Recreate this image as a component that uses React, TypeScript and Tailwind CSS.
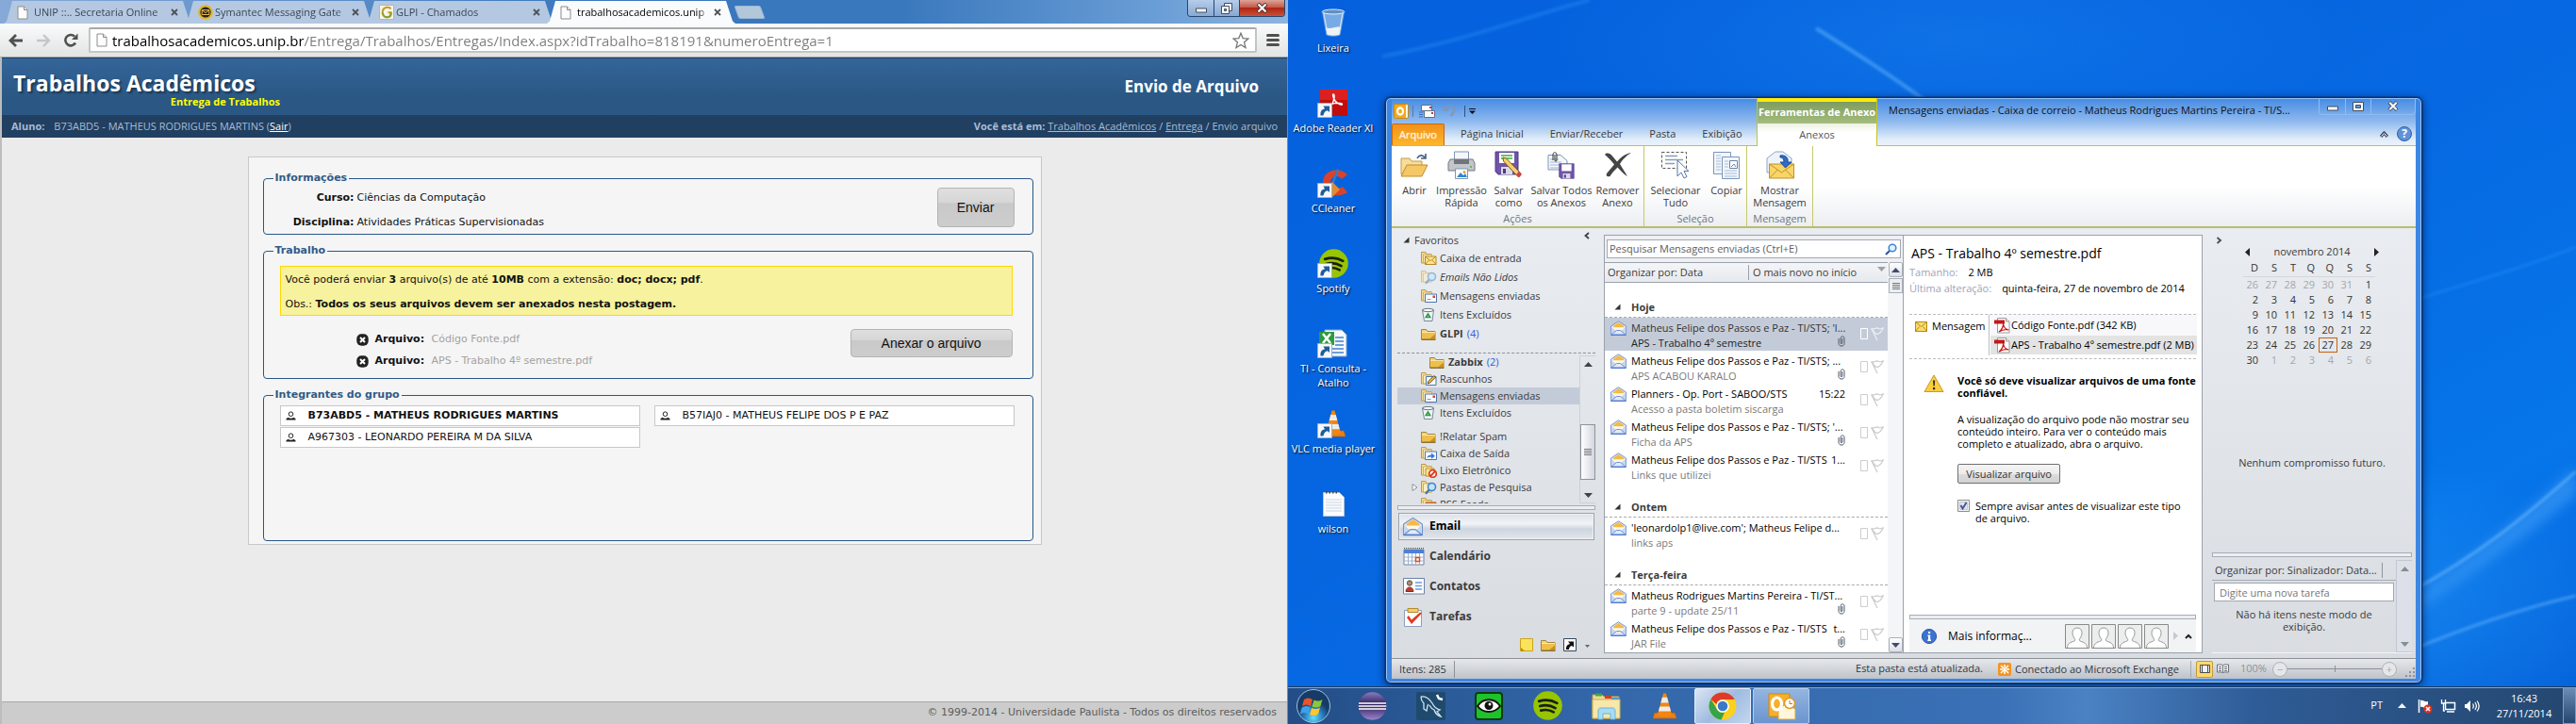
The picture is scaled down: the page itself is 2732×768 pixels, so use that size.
import React from "react";

const SANS = "font-['Open_Sans','Noto_Sans',sans-serif]";
const VERDANA = "font-['DejaVu_Sans',sans-serif]";

/* ---------------------------------------------------------------- icons */

function PageIcon() {
  return (
    <svg width="12" height="15" viewBox="0 0 12 15" className="shrink-0" aria-hidden="true">
      <path d="M1 1h6.5L11 4.5V14H1z" fill="#fdfdfd" stroke="#8d8d8d" />
      <path d="M7.5 1v3.5H11" fill="#e4e4e4" stroke="#8d8d8d" />
    </svg>
  );
}

function SymantecIcon() {
  return (
    <svg width="16" height="16" viewBox="0 0 16 16" className="shrink-0" aria-hidden="true">
      <circle cx="8" cy="8" r="7.8" fill="#e3b52c" />
      <circle cx="8" cy="8" r="5.6" fill="#26231a" />
      <path d="M4.2 5.7h7.6v4.8H4.2z" fill="#26231a" stroke="#e3c15a" />
      <path d="M4.2 5.7L8 8.6l3.8-2.9" fill="none" stroke="#e3c15a" />
    </svg>
  );
}

function GlpiIcon() {
  return (
    <svg width="16" height="16" viewBox="0 0 16 16" className="shrink-0" aria-hidden="true">
      <path d="M.5.5h15v15H.5z" fill="#f7f5e8" stroke="#b7b7a8" />
      <path d="M12.6 4.4C10.8 1.9 5.6 2.2 4 6c-1.5 4 1.400 7.500 4.800 7.300 2.600-.2 4-2.400 3.900-5.100H9.500" fill="none" stroke="#c79a23" strokeWidth="2" />
      <path d="M3.800 8.500c.3 3 2.500 4.900 5 4.800 2.600-.2 4-2.400 3.900-5.100" fill="none" stroke="#7fa23a" strokeWidth="2" />
    </svg>
  );
}

type FolderKind = "plain" | "inbox" | "search" | "faded" | "sent" | "draft" | "out" | "junk" | "rss";

function FolderIcon({ kind = "plain" }: { kind?: FolderKind }) {
  if (kind === "plain") {
    return (
      <svg width="16" height="14" viewBox="0 0 16 14" className="shrink-0" aria-hidden="true">
        <path d="M.5 2.500h5l1.500 2h8v8.500H.5z" fill="#f3d27a" stroke="#a4863c" />
        <path d="M1 5.500h14v7H1z" fill="#f0bf4a" />
        <path d="M9 12.500l6-5v5z" fill="#c98f1d" />
        <path d="M.5 13.200h15" stroke="#6f5415" />
        <path d="M1 5.500h14" stroke="#fbe6ac" />
      </svg>
    );
  }
  return (
    <svg width="17" height="16" viewBox="0 0 17 16" className={"shrink-0 " + (kind === "faded" ? "opacity-50" : "")} aria-hidden="true">
      <path d="M.5 1.500h4.500l1 2h5v9.500H.5z" fill="#f6dc91" stroke="#bf9b49" />
      <path d="M2.500 4h9v9h-9z" fill="#fbedc0" stroke="#cfae60" />
      {kind === "inbox" && (
        <>
          <path d="M4.500 6h11.500v8.500H4.500z" fill="#ffe493" stroke="#b98a26" />
          <path d="M4.500 6l5.700 4.700L16 6M4.500 14.500l4-4.600M16 14.500l-4-4.600" fill="none" stroke="#b98a26" />
        </>
      )}
      {(kind === "search" || kind === "faded") && (
        <>
          <circle cx="11.500" cy="7.500" r="4" fill="#bfe4fb" stroke="#4383c4" strokeWidth="1.600" />
          <path d="M8.600 10.600L5 14.800" stroke="#3a6ea8" strokeWidth="2.200" />
        </>
      )}
      {kind === "sent" && (
        <>
          <path d="M4.500 6h12v8.500h-12z" fill="#f7fbff" stroke="#4f74ad" />
          <path d="M6.500 11.500h4" stroke="#8299bd" />
          <path d="M12.500 7.500h2.500v2.500h-2.500z" fill="#d9432c" />
        </>
      )}
      {kind === "draft" && (
        <>
          <path d="M5.500 5.500h10.500v9H5.500z" fill="#f7fbff" stroke="#4f74ad" />
          <path d="M7 13l.8-2.500 6-6 1.700 1.700-6 6z" fill="#f5b93e" stroke="#3f3014" strokeWidth=".8" />
        </>
      )}
      {kind === "out" && (
        <>
          <path d="M4.500 6h12v8.500h-12z" fill="#f7fbff" stroke="#4f74ad" />
          <path d="M6.500 13c.2-2.500 2-3.600 4.500-3.600V7.500l4 3.200-4 3v-2c-2-.1-3.300.2-4.500 1.300z" fill="#3e78d6" />
        </>
      )}
      {kind === "junk" && (
        <>
          <path d="M5 6h9v8H5z" fill="#ffe493" stroke="#b98a26" />
          <circle cx="12.500" cy="11.500" r="3.800" fill="#fff" stroke="#da3a20" strokeWidth="1.800" />
          <path d="M10 14l5-5" stroke="#da3a20" strokeWidth="1.800" />
        </>
      )}
      {kind === "rss" && <path d="M5 6h11v9H5z" fill="#e8772e" stroke="#b3521a" />}
    </svg>
  );
}

function TrashSmall() {
  return (
    <svg width="16" height="16" viewBox="0 0 16 16" className="shrink-0" aria-hidden="true">
      <path d="M1.500 3h12l-1.500 11.500H3.500z" fill="#eef3f6" stroke="#7b8b9a" />
      <ellipse cx="7.500" cy="3" rx="6" ry="1.600" fill="#fff" stroke="#5c6b79" />
      <path d="M5.300 10.500L7.500 7l2.200 3.500z" fill="none" stroke="#2c9a3e" strokeWidth="1.500" />
    </svg>
  );
}

function OpenMail({ big = false }: { big?: boolean }) {
  return (
    <svg width={big ? 21 : 17} height={big ? 21 : 16} viewBox="0 0 17 16" className="shrink-0" aria-hidden="true">
      <path d="M.5 6L8.500.8 16.500 6v9.200H.5z" fill="#e3ecf9" stroke="#7391cb" />
      <path d="M3 5.800L8.500 2l5.700 3.800v3.700H3z" fill="#f8b843" />
      <path d="M3 7.200h11.200v3H3z" fill="#fff8e8" />
      <path d="M.8 7l5.400 4.300L.8 15zM16.200 7l-5.400 4.300 5.400 3.700z" fill="#c4d7f3" />
      <path d="M1 15l5.500-4.500h4L16 15z" fill="#dfeafa" stroke="#7391cb" />
      <path d="M.5 15.400h16" stroke="#4a78d4" />
    </svg>
  );
}

function Clip() {
  return (
    <svg width="8" height="12" viewBox="0 0 8 12" className="shrink-0" aria-hidden="true">
      <path d="M4.800 3v5c0 1-1.700 1-1.700 0V2.600C3.100.3 7 .3 7 2.600v5.800c0 3.600-6 3.600-6 0V3" fill="none" stroke="#4f5b6b" />
    </svg>
  );
}

function FlagGhost({ on }: { on: boolean }) {
  const c = on ? "#e9edf3" : "#cdcdcd";
  return (
    <svg width="27" height="18" viewBox="0 0 27 18" className="shrink-0" aria-hidden="true">
      <path d="M.5 3.500h7v11h-7z" fill="none" stroke={on ? "#ffffff" : c} />
      <path d="M11.500 3.500c3 2 5-2 8 0 2 1 3.500 0 5-1-1.500 2.500-2 5.500-6 7l-2.500-.5zM12 4l6 12" fill="none" stroke={c} strokeWidth="1.300" />
    </svg>
  );
}

function PdfIcon() {
  return (
    <svg width="17" height="17" viewBox="0 0 17 17" className="shrink-0" aria-hidden="true">
      <path d="M3.500.5h9l3.500 3.500v12H3.500z" fill="#fff" stroke="#9b9b9b" />
      <path d="M12.500.5V4H16" fill="#e6e6e6" stroke="#9b9b9b" />
      <path d="M0 2.500h11v4H0z" fill="#c41818" />
      <path d="M5 15c3-2 5-6 4.500-9C10 10 12 12.500 15.500 13c-3-.8-7-.3-10.500 2z" fill="none" stroke="#c41818" strokeWidth="1.200" />
    </svg>
  );
}

function Person() {
  return (
    <svg width="26" height="26" viewBox="0 0 26 26" className="shrink-0" aria-hidden="true">
      <path d="M.5.5h25v25H.5z" fill="#eceded" stroke="#8a8a8a" />
      <path d="M2.500 25c.3-4.500 3-5.500 7.500-7 1-.5 1-1.500.2-2.700-1.200-1.600-2.200-3.500-2.200-6C8 6 10 4 13 4s5 2 5 5.300c0 2.500-1 4.400-2.200 6-.8 1.200-.8 2.200.2 2.700 4.500 1.500 7.200 2.500 7.500 7" fill="#fff" stroke="#999" />
    </svg>
  );
}

function SpotifyMark({ size }: { size: number }) {
  return (
    <svg width={size} height={size} viewBox="0 0 30 30" aria-hidden="true">
      <circle cx="15" cy="15" r="14.800" fill="#97c500" />
      <path d="M6 10.500c6-1.800 13-1.200 18.500 2M7 15.500c5.500-1.500 11-.9 15.800 2M8 20c4.500-1.200 9-.7 13 1.600" fill="none" stroke="#1b1f10" strokeWidth="2.600" strokeLinecap="round" />
    </svg>
  );
}

function VlcMark({ size }: { size: number }) {
  return (
    <svg width={size} height={size} viewBox="0 0 30 30" aria-hidden="true">
      <path d="M4 23h22l2 6H2z" fill="#ee7d10" stroke="#c65f05" strokeWidth=".6" />
      <path d="M13.500 1.500h3L23 25.500c-4 2-12 2-16 0z" fill="#f5850f" />
      <path d="M12.300 6h5.400l1.600 6h-8.600zM9.600 16h10.800l1.400 5.200H8.200z" fill="#ececec" />
    </svg>
  );
}

function ShortcutBadge() {
  return (
    <svg width="16" height="16" viewBox="0 0 16 16" className="absolute -left-px bottom-0" aria-hidden="true">
      <path d="M.5.500h15v15H.5z" fill="#f6f8fa" stroke="#9fb3c7" />
      <path d="M3.500 13.500c-.5-4 1-6.500 4.500-7.300L6.500 3.500h6.500V10l-2-1.800c-2.500.5-4 2-4.500 5.300z" fill="#1f5c9e" />
    </svg>
  );
}

function Tri({ dir, color = "#4f535a" }: { dir: "up" | "down" | "left" | "right"; color?: string }) {
  const d = { up: "M0 7l4.500-5L9 7z", down: "M0 2l4.500 5L9 2z", left: "M7 0L2 4.500 7 9z", right: "M2 0l5 4.500L2 9z" }[dir];
  return (
    <svg width="9" height="9" viewBox="0 0 9 9" className="shrink-0" aria-hidden="true">
      <path d={d} fill={color} />
    </svg>
  );
}

function Twisty() {
  return (
    <svg width="7" height="7" viewBox="0 0 7 7" className="shrink-0" aria-hidden="true">
      <path d="M6.500.5v6h-6z" fill="#333" />
    </svg>
  );
}

/* -------------------------------------------------------------- browser */

function BrowserTab({ icon, title, active = false }: { icon: React.ReactNode; title: string; active?: boolean }) {
  return (
    <div className={"relative -mr-2 flex h-6 w-[200px] items-center pl-[14px] [clip-path:polygon(0_100%,3px_90%,9px_0,190px_0,197px_90%,200px_100%)] " + (active ? "z-10 bg-[#fafbfc] text-black" : "bg-[#b4c8e2] text-[#3c4654]")}>
      <span className="flex w-[18px] shrink-0 items-center">{icon}</span>
      <button type="button" className="w-[140px] text-left text-[11px] whitespace-nowrap [mask-image:linear-gradient(to_right,#000_92%,transparent)]">{title}</button>
      <button type="button" aria-label={"Fechar " + title} className="ml-[5px]">
        <svg width="8" height="8" viewBox="0 0 8 8" aria-hidden="true"><path d="M1 1l6 6M7 1L1 7" stroke="#4b5258" strokeWidth="1.800" /></svg>
      </button>
    </div>
  );
}

function Member({ name, bold = false }: { name: string; bold?: boolean }) {
  return (
    <li className={"flex h-[22px] items-center border border-[#c8c8c8] bg-white pl-[5px] " + (bold ? "font-bold" : "")}>
      <svg width="11" height="10" viewBox="0 0 11 10" className="mr-[13px]" aria-hidden="true">
        <circle cx="5.500" cy="3.200" r="2.300" fill="#fff" stroke="#222" />
        <path d="M.5 9.500V8.300l2-1.500c1.500 1.200 4.500 1.200 6 0l2 1.500v1.200z" fill="#222" />
      </svg>
      {name}
    </li>
  );
}

function FileRow({ name }: { name: string }) {
  return (
    <li className="flex h-[23px] items-center">
      <button type="button" aria-label={"Remover " + name} className="mr-[7px]">
        <svg width="13" height="13" viewBox="0 0 13 13" aria-hidden="true">
          <rect x=".3" y=".3" width="12.400" height="12.400" rx="5" fill="#222" />
          <path d="M4 4l5 5M9 4L4 9" stroke="#fff" strokeWidth="2" />
        </svg>
      </button>
      <b className="w-[60px]">Arquivo:</b>
      <span className="text-[#a2a2a2]">{name}</span>
    </li>
  );
}

const FIELDSET = "rounded border border-[#28568a]";
const LEGEND = "ml-[10px] px-[2px] text-[11px] leading-[14px] font-bold text-[#315a87]";
const GREY_BUTTON = "rounded border border-[#b4b4b4] bg-[linear-gradient(#dfdfdf,#d6d6d6_38%,#c9c9c9_39%,#cdcdcd)] font-['Liberation_Sans',Arial,sans-serif] text-sm text-[#111]";

function Browser() {
  return (
    <section className={"flex min-w-0 flex-col bg-[#ebebeb] " + SANS}>
      <header>
        <div className="flex h-[25px] items-stretch justify-between bg-[linear-gradient(to_right,#86a9d8,#3a78bd_45%,#3a78bd_70%,#6a9ed6_90%,#8fb4de)] pl-1">
          <div className="flex items-end">
            <BrowserTab icon={<PageIcon />} title="UNIP ::.. Secretaria Online" />
            <BrowserTab icon={<SymantecIcon />} title="Symantec Messaging Gate" />
            <BrowserTab icon={<GlpiIcon />} title="GLPI - Chamados" />
            <BrowserTab active icon={<PageIcon />} title="trabalhosacademicos.unip" />
            <button type="button" aria-label="Nova guia" className="mb-[5px] ml-[9px] h-[14px] w-7 skew-x-[20deg] rounded-xs border border-[#9ab6d6] bg-[#b3c7db]" />
          </div>
          <div className="mr-[3px] flex h-[18px] overflow-hidden rounded-b border border-t-0 border-[#27476f]">
            <button type="button" aria-label="Minimizar" className="flex w-7 items-center justify-center border-r border-[#27476f] bg-linear-to-b from-[#b6cdea] to-[#87a9d2]">
              <svg width="12" height="6" viewBox="0 0 12 6" className="mt-1" aria-hidden="true"><path d="M.5 1h11v4H.5z" fill="#fff" stroke="#3e4c5e" /></svg>
            </button>
            <button type="button" aria-label="Restaurar" className="flex w-[27px] items-center justify-center border-r border-[#27476f] bg-linear-to-b from-[#b6cdea] to-[#87a9d2]">
              <svg width="12" height="12" viewBox="0 0 12 12" aria-hidden="true"><path d="M3.500.5h8v8h-8z" fill="#fff" stroke="#3e4c5e" /><path d="M.5 3.500h8v8h-8z" fill="#fff" stroke="#3e4c5e" /><path d="M3.500 6.500h2v2h-2z" fill="#87a9d2" stroke="#3e4c5e" /></svg>
            </button>
            <button type="button" aria-label="Fechar" className="flex w-[47px] items-center justify-center bg-[linear-gradient(#dda398,#c65a49_45%,#b02514_50%,#cb5136)]">
              <svg width="13" height="11" viewBox="0 0 13 11" aria-hidden="true"><path d="M2 1l9 9M11 1l-9 9" stroke="#4d2b31" strokeWidth="4" /><path d="M2.500 1.500l8 8M10.500 1.500l-8 8" stroke="#fff" strokeWidth="2.200" /></svg>
            </button>
          </div>
        </div>
        <div className="flex h-9 items-center border-b border-[#a3a5a6] bg-linear-to-b from-[#fafbfc] to-[#e2e3e3] pl-[9px]">
          <button type="button" aria-label="Voltar" className="mr-[13px]">
            <svg width="16" height="14" viewBox="0 0 16 14" aria-hidden="true"><path d="M15 7H3M8 1L2 7l6 6" fill="none" stroke="#505050" strokeWidth="2.800" /></svg>
          </button>
          <button type="button" aria-label="Avançar" className="mr-[13px]">
            <svg width="16" height="14" viewBox="0 0 16 14" aria-hidden="true"><path d="M1 7h12M8 1l6 6-6 6" fill="none" stroke="#c6c6c6" strokeWidth="2.400" /></svg>
          </button>
          <button type="button" aria-label="Recarregar" className="mr-[11px]">
            <svg width="16" height="15" viewBox="0 0 16 15" aria-hidden="true"><path d="M13 10.500A5.700 5.700 0 1 1 12 3.500" fill="none" stroke="#505050" strokeWidth="2.600" /><path d="M15.500.5v6.500H9z" fill="#505050" /></svg>
          </button>
          <div className="flex h-[27px] flex-1 items-center rounded-xs border-2 border-t-[#a9a9a9] border-[#c3c5c5] bg-white px-[6px]">
            <PageIcon />
            <input
              aria-label="Endereço"
              defaultValue="trabalhosacademicos.unip.br/Entrega/Trabalhos/Entregas/Index.aspx?idTrabalho=818191&numeroEntrega=1"
              className="ml-[5px] min-w-0 flex-1 bg-[linear-gradient(to_right,#000_203px,#7c7c7c_203px)] bg-clip-text text-[15px] leading-5 text-transparent outline-none"
            />
            <button type="button" aria-label="Favoritar">
              <svg width="18" height="18" viewBox="0 0 18 18" aria-hidden="true"><path d="M9 1.200l2.200 5.400 5.800.4-4.400 3.800 1.400 5.700L9 13.400l-5 3.100 1.400-5.700L1 7l5.800-.4z" fill="#fff" stroke="#767676" strokeWidth="1.300" /></svg>
            </button>
          </div>
          <button type="button" aria-label="Menu" className="mr-[9px] ml-[10px] flex flex-col gap-[2px]">
            <span className="h-[3px] w-[14px] rounded-xs bg-[#505050]" />
            <span className="h-[3px] w-[14px] rounded-xs bg-[#505050]" />
            <span className="h-[3px] w-[14px] rounded-xs bg-[#505050]" />
          </button>
        </div>
      </header>

      <div className="flex min-h-0 flex-1 flex-col border-r border-l-2 border-[#bdbdbd] border-r-[#888]">
        <div className="flex h-[61px] items-center justify-between border-t border-[#1f3c5c] bg-linear-to-b from-[#34659a] to-[#2a5783] to-70% px-3 text-white">
          <div className="w-[283px] pt-1">
            <h1 className="text-[23px] leading-7 font-bold whitespace-nowrap [text-shadow:2px_2px_2px_rgba(0,0,0,0.4)]">Trabalhos Acadêmicos</h1>
            <p className="text-right text-[11px] leading-3 font-bold text-[#ffff00]">Entrega de Trabalhos</p>
          </div>
          <h2 className="pr-[18px] text-[17px] font-bold">Envio de Arquivo</h2>
        </div>
        <div className="flex h-6 items-center justify-between bg-[#213f60] px-[10px] text-[11px] text-[#a5bcd8]">
          <p><b className="mr-[10px]">Aluno:</b>B73ABD5 - MATHEUS RODRIGUES MARTINS (<a href="#sair" className="text-white underline">Sair</a>)</p>
          <nav aria-label="Você está em">
            <b>Você está em:</b> <a href="#trabalhos" className="underline">Trabalhos Acadêmicos</a> / <a href="#entrega" className="underline">Entrega</a> / Envio arquivo
          </nav>
        </div>

        <main className={"flex-1 pt-5 text-[11px] text-[#111] " + VERDANA}>
          <form className="mx-auto flex w-[842px] flex-col gap-[10px] border border-[#c8c8c8] bg-[#f5f5f5] pt-[15px] pr-2 pb-[3px] pl-[15px]" onSubmit={(e) => e.preventDefault()}>
            <fieldset className={FIELDSET}>
              <legend className={LEGEND}>Informações</legend>
              <div className="flex h-[52px] items-start justify-between pr-[19px]">
                <dl className="grid grid-cols-[96px_auto] gap-x-[3px] pt-px leading-[26px]">
                  <dt className="text-right font-bold">Curso:</dt>
                  <dd>Ciências da Computação</dd>
                  <dt className="text-right font-bold">Disciplina:</dt>
                  <dd>Atividades Práticas Supervisionadas</dd>
                </dl>
                <button type="submit" className={"mt-[3px] h-[42px] w-[82px] " + GREY_BUTTON}>Enviar</button>
              </div>
            </fieldset>
            <fieldset className={FIELDSET}>
              <legend className={LEGEND}>Trabalho</legend>
              <div className="flex h-32 flex-col pt-[9px] pr-[21px] pl-[17px]">
                <div className="h-[53px] shrink-0 border border-[#ffd800] bg-[#f7f29d] pt-px pl-[5px] leading-[26px]">
                  <p>Você poderá enviar <b>3</b> arquivo(s) de até <b>10MB</b> com a extensão: <b>doc; docx; pdf</b>.</p>
                  <p>Obs.: <b>Todos os seus arquivos devem ser anexados nesta postagem.</b></p>
                </div>
                <div className="mt-[14px] flex items-start justify-between pl-[81px]">
                  <ul>
                    <FileRow name="Código Fonte.pdf" />
                    <FileRow name="APS - Trabalho 4º semestre.pdf" />
                  </ul>
                  <button type="button" className={"h-[30px] w-[172px] " + GREY_BUTTON}>Anexar o arquivo</button>
                </div>
              </div>
            </fieldset>
            <fieldset className={FIELDSET}>
              <legend className={LEGEND}>Integrantes do grupo</legend>
              <ul className="grid h-[147px] grid-cols-2 content-start gap-x-[15px] gap-y-px pt-1 pr-[19px] pl-[17px]">
                <Member bold name="B73ABD5 - MATHEUS RODRIGUES MARTINS" />
                <Member name="B57IAJ0 - MATHEUS FELIPE DOS P E PAZ" />
                <Member name="A967303 - LEONARDO PEREIRA M DA SILVA" />
              </ul>
            </fieldset>
          </form>
        </main>
        <footer className={"flex h-6 items-center justify-end border-t border-[#a9a9a9] bg-[#cccccc] pr-[11px] text-[11px] text-[#5d5d5d] " + VERDANA}>
          © 1999-2014 - Universidade Paulista - Todos os direitos reservados
        </footer>
      </div>
    </section>
  );
}

/* -------------------------------------------------------------- outlook */

function RibbonButton({ lines, icon, width }: { lines: string[]; icon: React.ReactNode; width: string }) {
  return (
    <button type="button" className={"flex flex-col items-center pt-[4px] leading-[13px] " + width}>
      <span className="mb-[4px] flex h-8 items-center justify-center">{icon}</span>
      {lines.map((l) => (
        <span key={l} className="whitespace-nowrap">{l}</span>
      ))}
    </button>
  );
}

function RibbonGroup({ label, children }: { label: string; children: React.ReactNode }) {
  return (
    <div className="flex flex-col justify-between border-r border-[#c5c96a]">
      <div className="flex">{children}</div>
      <span className="pb-px text-center leading-[15px] text-[#6e7683]">{label}</span>
    </div>
  );
}

const floppy = (
  <>
    <path d="M1 1h24v24H4l-3-3z" fill="#6f55a8" stroke="#4f3a84" />
    <path d="M5 2h16v11H5z" fill="#fff" />
    <path d="M7 17h12v8H7z" fill="#dcd8e6" />
    <path d="M9 19h3v5H9z" fill="#4f3a84" />
  </>
);

function Ribbon() {
  return (
    <div className="flex h-[85px] shrink-0 bg-linear-to-b from-white from-50% to-[#eceef1] text-[11px] text-[#3b3b3b]">
      <RibbonGroup label="Ações">
        <RibbonButton width="w-12" lines={["Abrir"]} icon={
          <svg width="30" height="26" viewBox="0 0 30 26" aria-hidden="true">
            <path d="M1 6h9l2 3h11v14H1z" fill="#f7dd9a" stroke="#c59b45" />
            <path d="M7 13h22l-6 12H1z" fill="#f5c765" stroke="#c28c2b" />
            <path d="M18 6c2-4 6-4 8-1M27 1v5h-5" fill="none" stroke="#47607f" strokeWidth="1.600" />
          </svg>} />
        <RibbonButton width="w-[52px]" lines={["Impressão", "Rápida"]} icon={
          <svg width="30" height="30" viewBox="0 0 30 30" aria-hidden="true">
            <path d="M7.500 1h15v10h-15z" fill="#f4f8fd" stroke="#7f95b3" />
            <path d="M3 9h24l2 4v8H1v-8z" fill="#c2c6cb" stroke="#75797e" />
            <path d="M7 9h16v5H7z" fill="#71757b" />
            <path d="M8.500 19h13v10.500h-13z" fill="#fff" stroke="#7f95b3" />
            <path d="M10 28l4-5 3 3 2-2 2 4z" fill="#2f86d6" /><circle cx="18" cy="22.500" r="1.500" fill="#f0a030" />
            <circle cx="25" cy="17" r="1" fill="#45b045" />
          </svg>} />
        <RibbonButton width="w-12" lines={["Salvar", "como"]} icon={
          <svg width="30" height="30" viewBox="0 0 30 30" aria-hidden="true">
            {floppy}
            <path d="M7 5h12M7 8h12" stroke="#3cae3c" strokeWidth="1.500" />
            <path d="M9 7l3.500 1L28 24l-3 3.500L9.500 11z" fill="#f8ce6a" stroke="#7b5b1c" />
            <path d="M26 21.500l3 3.500-3 3.500-3-3.300z" fill="#c44" />
          </svg>} />
        <RibbonButton width="w-16" lines={["Salvar Todos", "os Anexos"]} icon={
          <svg width="30" height="30" viewBox="0 0 30 30" aria-hidden="true">
            <path d="M1 4.500h13l7 6V20H1z" fill="#f4f8fd" stroke="#7f95b3" />
            <path d="M3 9h9M3 12h12M3 15h9M3 18h9" stroke="#9fb4d2" />
            <path d="M6 10V4c0-3 4-3 4 0v6c0 1.500-2 1.500-2 0V5" fill="none" stroke="#333" />
            <g transform="translate(12 13) scale(.65)">{floppy}</g>
          </svg>} />
        <RibbonButton width="w-[55px]" lines={["Remover", "Anexo"]} icon={
          <svg width="30" height="28" viewBox="0 0 30 28" aria-hidden="true">
            <path d="M1 3c2-3 6-1 7.500 1L14 10.500C19 5 23 2 29 1c-6 4-9 7-12 12l8 13c-4-2-7-6-10.500-9.500C11 20 9 22 6.500 26 3 27 2 25 3 23l8-9.500C8 9 4 6 1 3z" fill="#454545" />
          </svg>} />
      </RibbonGroup>
      <RibbonGroup label="Seleção">
        <RibbonButton width="w-[66px]" lines={["Selecionar", "Tudo"]} icon={
          <svg width="32" height="30" viewBox="0 0 32 30" aria-hidden="true">
            <path d="M1.500 1.500h26v17h-26z" fill="#fff" stroke="#555" strokeDasharray="3 2" />
            <path d="M5 5.500h13M5 9.500h19M5 13.500h10" stroke="#8a9db8" strokeWidth="1.500" />
            <path d="M18 10v17l4-4 3 6 3-1.500-3-6h5z" fill="#fff" stroke="#5878a8" />
          </svg>} />
        <RibbonButton width="w-[42px]" lines={["Copiar"]} icon={
          <svg width="30" height="30" viewBox="0 0 30 30" aria-hidden="true">
            <path d="M1.500 1.500h18v23h-18z" fill="#f1f6fc" stroke="#7d95b8" />
            <path d="M4 5h5M4 8h5M4 11h5M4 14h5M4 17h5M4 20h5" stroke="#a9bcd6" />
            <path d="M10.500 6.500h18v23h-18z" fill="#f1f6fc" stroke="#7d95b8" />
            <path d="M18.500 10.500h8v8h-8z" fill="#fff" stroke="#6c83a6" />
            <path d="M13 11h4M13 14h4M13 17h4M13 21h13M13 24h13M13 27h13" stroke="#a9bcd6" />
            <path d="M20 17l3-3 2 3" fill="none" stroke="#6c83a6" />
          </svg>} />
      </RibbonGroup>
      <RibbonGroup label="Mensagem">
        <RibbonButton width="w-[69px]" lines={["Mostrar", "Mensagem"]} icon={
          <svg width="32" height="30" viewBox="0 0 32 30" aria-hidden="true">
            <path d="M2 8l9-7h8l9 7v15H2z" fill="#eef3fa" stroke="#8ea5c6" />
            <path d="M4.500 14h26v15h-26z" fill="#f9d567" stroke="#bf922c" />
            <path d="M4.500 14l13 9 13-9M4.500 29l9-9M30.500 29l-9-9" fill="none" stroke="#bf922c" />
            <path d="M16 5c6-1 9 3 8 7h4l-6.500 6-5.500-6h4c0-3-1-5-4-5z" fill="#2f6bc8" stroke="#1e4c98" />
          </svg>} />
      </RibbonGroup>
    </div>
  );
}

function NavItem({ icon, label, count, italic = false, selected = false, deep = false, height, twisty = false }: {
  icon: React.ReactNode; label: string; count?: string; italic?: boolean; selected?: boolean; deep?: boolean; height: string; twisty?: boolean;
}) {
  return (
    <li>
      <button type="button" className={"flex w-full items-center text-left whitespace-nowrap " + height + " " + (deep ? "pl-[25px] " : "pl-4 ") + (selected ? "bg-[#c4cbd8]" : "")}>
        <span className="flex w-[9px] shrink-0">
          {twisty && <svg width="7" height="8" viewBox="0 0 7 8" className="-ml-px" aria-hidden="true"><path d="M1 .5v7L6 4z" fill="#fff" stroke="#8c9199" /></svg>}
        </span>
        <span className="flex w-5 shrink-0">{icon}</span>
        <span className={(count ? "font-bold " : "") + (italic ? "italic" : "")}>{label}</span>
        {count && <span className="ml-1 text-[#2a5fdb]">{count}</span>}
      </button>
    </li>
  );
}

function ScrollButton({ dir }: { dir: "up" | "down" }) {
  return (
    <button type="button" aria-label={dir === "up" ? "Rolar para cima" : "Rolar para baixo"} className="flex h-4 w-full shrink-0 items-center justify-center rounded-xs border border-[#aab0ba] bg-linear-to-b from-white to-[#dcdfe4]">
      <Tri dir={dir} color="#3f4a72" />
    </button>
  );
}

function FlatScroll({ dir, color }: { dir: "up" | "down"; color: string }) {
  return (
    <button type="button" aria-label={dir === "up" ? "Rolar para cima" : "Rolar para baixo"} className="flex h-4 w-full shrink-0 items-center justify-center">
      <Tri dir={dir} color={color} />
    </button>
  );
}

const SPLITTER = "h-[5px] shrink-0 border border-[#a7adb7] bg-[#eceef1]";

function Navigation() {
  const modules = [
    { label: "Email", on: true, icon: <OpenMail big /> },
    { label: "Calendário", on: false, icon: (
      <svg width="23" height="20" viewBox="0 0 23 20" aria-hidden="true"><path d="M1 3h21v16H1z" fill="#fff" stroke="#6b83a8" /><path d="M1 3h21v4H1z" fill="#4d80d4" /><path d="M1 1.500h21" stroke="#555" strokeDasharray="1 1" /><path d="M5.500 7v12M9.500 7v12M13.500 7v12M17.500 7v12M1 11h21M1 15h21" stroke="#9fb2cf" /><path d="M13.500 11.500h4v4h-4z" fill="#fff" stroke="#e04a1c" strokeWidth="1.500" /></svg>) },
    { label: "Contatos", on: false, icon: (
      <svg width="23" height="18" viewBox="0 0 23 18" aria-hidden="true"><path d="M.5.500h22v16.500H.5z" fill="#fff" stroke="#6b83a8" /><circle cx="7" cy="5.500" r="2.700" fill="#b08a70" stroke="#554" /><path d="M3 14.500c0-6 8-6 8 0z" fill="#c0392b" stroke="#7c3020" /><path d="M13 5h7M13 8.500h7M13 12h7" stroke="#6a9be0" strokeWidth="1.500" /></svg>) },
    { label: "Tarefas", on: false, icon: (
      <svg width="21" height="21" viewBox="0 0 21 21" aria-hidden="true"><path d="M1.500 3.500h18v17h-18z" fill="#fafcff" stroke="#8ba0c0" /><path d="M5 1.500h11v4H5z" fill="#f2cd68" stroke="#b48c2e" /><path d="M4 11l5 7L20 6.500l-2-1L9 13.500 6 9z" fill="#e5391f" /></svg>) },
  ];
  return (
    <nav aria-label="Pastas" className="flex w-[216px] shrink-0 flex-col pb-[4px] pl-[6px]">
      <div className="flex items-start justify-between pt-1 pr-[6px]">
        <button type="button" className="ml-[6px] flex items-center gap-[5px] leading-[17px]"><Twisty />Favoritos</button>
        <button type="button" aria-label="Minimizar painel">
          <svg width="6" height="8" viewBox="0 0 6 8" aria-hidden="true"><path d="M5 1L1.500 4 5 7" fill="none" stroke="#3b3f46" strokeWidth="1.800" /></svg>
        </button>
      </div>
      <ul className="mt-px">
        <NavItem height="h-5" icon={<FolderIcon kind="inbox" />} label="Caixa de entrada" />
        <NavItem height="h-5" italic icon={<FolderIcon kind="faded" />} label="Emails Não Lidos" />
        <NavItem height="h-5" icon={<FolderIcon kind="sent" />} label="Mensagens enviadas" />
        <NavItem height="h-5" icon={<TrashSmall />} label="Itens Excluídos" />
        <NavItem height="h-5" icon={<FolderIcon />} label="GLPI" count="(4)" />
      </ul>
      <div className="mt-[10px] flex min-h-0 flex-1 border-t border-dashed border-[#8e949d]">
        <ul className="min-w-0 flex-1 overflow-hidden">
          <NavItem height="h-[18px]" deep icon={<FolderIcon />} label="Zabbix" count="(2)" />
          <NavItem height="h-[18px]" icon={<FolderIcon kind="draft" />} label="Rascunhos" />
          <NavItem height="h-[18px]" selected icon={<FolderIcon kind="sent" />} label="Mensagens enviadas" />
          <NavItem height="h-[18px]" icon={<TrashSmall />} label="Itens Excluídos" />
          <li className="h-[7px]" />
          <NavItem height="h-[18px]" icon={<FolderIcon />} label="!Relatar Spam" />
          <NavItem height="h-[18px]" icon={<FolderIcon kind="out" />} label="Caixa de Saída" />
          <NavItem height="h-[18px]" icon={<FolderIcon kind="junk" />} label="Lixo Eletrônico" />
          <NavItem height="h-[18px]" twisty icon={<FolderIcon kind="search" />} label="Pastas de Pesquisa" />
          <NavItem height="h-[18px]" icon={<FolderIcon kind="rss" />} label="RSS Feeds" />
        </ul>
        <div className="mt-[2px] flex w-[17px] flex-col border border-r-0 border-[#cdd1d8]">
          <FlatScroll dir="up" color="#3f444c" />
          <div className="flex-1" />
          <div className="flex h-[59px] shrink-0 flex-col items-center justify-center gap-px border border-[#8e949d] bg-linear-to-r from-white to-[#d3d7de]">
            <span className="h-px w-2 bg-[#777]" /><span className="h-px w-2 bg-[#777]" /><span className="h-px w-2 bg-[#777]" /><span className="h-px w-2 bg-[#777]" />
          </div>
          <div className="h-[8px]" />
          <FlatScroll dir="down" color="#3f444c" />
        </div>
      </div>
      <div className={"mt-[2px] " + SPLITTER} />
      <ul className="mt-[1px] flex flex-col text-xs font-bold">
        {modules.map((m) => (
          <li key={m.label} className="flex h-8 items-center">
            <button type="button" className={"mx-px flex h-[29px] w-full items-center border pl-[4px] " + (m.on ? "border-[#9ba3b0] bg-[linear-gradient(#dde2ea,#f1f3f6_40%,#cdd5df_60%,#e3e7ec)] text-black shadow-[inset_0_0_0_1px_#eef1f5]" : "border-transparent")}>
              <span className="flex w-7 shrink-0 justify-start">{m.icon}</span>
              {m.label}
            </button>
          </li>
        ))}
      </ul>
      <div className="mt-1 flex h-5 items-center justify-end gap-2 pr-[5px]">
        <svg width="14" height="14" viewBox="0 0 14 14" aria-hidden="true"><path d="M.5.500h13v13H.5z" fill="#fbe25c" stroke="#c9a51e" /><path d="M1 10l4 3.500H1z" fill="#b8860b" /></svg>
        <FolderIcon />
        <svg width="14" height="14" viewBox="0 0 14 14" aria-hidden="true"><path d="M.5.500h13v13H.5z" fill="#fff" stroke="#33475f" /><path d="M3 12c0-4 1-5 4-6L5 3.500h6V9.500L9 8c-2 .6-3 2-3 4z" fill="#111" /></svg>
        <svg width="7" height="9" viewBox="0 0 7 9" aria-hidden="true"><path d="M1 4h5L3.500 7z" fill="#666" /></svg>
      </div>
    </nav>
  );
}

interface Mail { from: string; subject: string; time?: string; clip?: boolean; on?: boolean }

const MAIL_GROUPS: { day: string; mails: Mail[] }[] = [
  { day: "Hoje", mails: [
    { from: "Matheus Felipe dos Passos e Paz - TI/STS; 'l...", subject: "APS - Trabalho 4º semestre", clip: true, on: true },
    { from: "Matheus Felipe dos Passos e Paz - TI/STS; ...", subject: "APS ACABOU KARALO", clip: true },
    { from: "Planners - Op. Port - SABOO/STS", time: "15:22", subject: "Acesso a pasta boletim siscarga" },
    { from: "Matheus Felipe dos Passos e Paz - TI/STS; '...", subject: "Ficha da APS", clip: true },
    { from: "Matheus Felipe dos Passos e Paz - TI/STS", time: "1...", subject: "Links que utilizei" },
  ] },
  { day: "Ontem", mails: [{ from: "'leonardolp1@live.com'; Matheus Felipe d...", subject: "links aps" }] },
  { day: "Terça-feira", mails: [
    { from: "Matheus Rodrigues Martins Pereira - TI/ST...", subject: "parte 9 - update 25/11", clip: true },
    { from: "Matheus Felipe dos Passos e Paz - TI/STS", time: "t...", subject: "JAR File", clip: true },
  ] },
];

function MailList() {
  return (
    <section aria-label="Mensagens" className="flex w-[318px] shrink-0 flex-col border border-[#9ba1ab] bg-white">
      <div className="flex h-[28px] items-center bg-[#eef0f3] px-[2px]">
        <div className="flex h-5 flex-1 items-center border border-[#a2a8b2] bg-white pr-[3px] pl-[2px]">
          <input aria-label="Pesquisar Mensagens enviadas" placeholder="Pesquisar Mensagens enviadas (Ctrl+E)" className="min-w-0 flex-1 outline-none placeholder:text-[#5d5d5d]" />
          <svg width="13" height="13" viewBox="0 0 13 13" aria-hidden="true"><circle cx="8" cy="5" r="3.800" fill="#e2f3fd" stroke="#3f86d8" strokeWidth="1.600" /><path d="M5 8L1 12" stroke="#2a5aa8" strokeWidth="2.200" /></svg>
        </div>
      </div>
      <div className="flex min-h-0 flex-1">
        <div className="flex min-w-0 flex-1 flex-col">
          <div className="flex h-[22px] shrink-0 items-center border-y border-[#9ba1ab] bg-linear-to-b from-[#f4f5f7] to-[#e6e9ed]">
            <button type="button" className="w-[153px] border-r border-[#9ba1ab] pl-[3px] text-left leading-4">Organizar por: Data</button>
            <button type="button" className="flex flex-1 items-center justify-between pr-[2px] pl-1">O mais novo no início<span className="-mt-2"><Tri dir="down" color="#9ba1ab" /></span></button>
          </div>
          {MAIL_GROUPS.map((g) => (
            <div key={g.day}>
              <h3 className="flex h-[37px] items-end border-b border-dashed border-[#aaa] pb-[2px] pl-[10px] leading-4 font-bold"><span className="mr-[11px] mb-[5px]"><Twisty /></span>{g.day}</h3>
              <ul>
                {g.mails.map((m) => (
                  <li key={m.from + m.subject}>
                    <button type="button" className={"flex h-[35px] w-full items-start pl-[6px] text-left " + (m.on ? "bg-[#c4cbd8]" : "")}>
                      <span className="mt-[3px] w-[22px] shrink-0"><OpenMail /></span>
                      <span className="mt-[3px] flex min-w-0 flex-1 flex-col leading-4">
                        <span className={"flex justify-between pr-[2px] whitespace-nowrap " + (m.on ? "text-[#333]" : "text-black")}>{m.from}{m.time && <span>{m.time}</span>}</span>
                        <span className={"flex justify-between pr-[2px] " + (m.on ? "text-[#222]" : "text-[#7a7a7a]")}>{m.subject}{m.clip && <Clip />}</span>
                      </span>
                      <span className="mt-2 mr-[2px] ml-[14px]"><FlagGhost on={!!m.on} /></span>
                    </button>
                  </li>
                ))}
              </ul>
            </div>
          ))}
        </div>
        <div className="flex w-4 shrink-0 flex-col bg-[#f4f5f6] pl-px">
          <ScrollButton dir="up" />
          <div className="mt-px flex h-4 flex-col items-center justify-center gap-px border border-[#aab0ba] bg-[#eceef1]">
            <span className="h-px w-2 bg-[#777]" /><span className="h-px w-2 bg-[#777]" /><span className="h-px w-2 bg-[#777]" /><span className="h-px w-2 bg-[#777]" />
          </div>
          <div className="flex-1" />
          <ScrollButton dir="down" />
        </div>
      </div>
    </section>
  );
}

function ReadingPane() {
  return (
    <section aria-label="Painel de leitura" className="flex min-w-0 flex-1 flex-col border border-l-0 border-[#9ba1ab] bg-white px-[6px] text-black">
      <h2 className="mt-[9px] pl-[2px] text-[14px] leading-5">APS - Trabalho 4º semestre.pdf</h2>
      <dl className="mt-px leading-[17px]">
        <div className="flex"><dt className="mr-[11px] text-[#9ea3b8]">Tamanho:</dt><dd>2 MB</dd></div>
        <div className="flex"><dt className="mr-[11px] text-[#9ea3b8]">Última alteração:</dt><dd>quinta-feira, 27 de novembro de 2014</dd></div>
      </dl>
      <div className="mt-[19px] flex border-y border-dashed border-[#b9bcc2] pb-[3px] whitespace-nowrap">
        <button type="button" className="flex h-[43px] w-[85px] items-start gap-[5px] border-r border-[#b9bcc2] pt-1 pl-[6px]">
          <svg width="13" height="11" viewBox="0 0 13 11" className="mt-[3px]" aria-hidden="true"><path d="M.5.500h12v10H.5z" fill="#fbdc6a" stroke="#b58a22" /><path d="M.5.500l6 5 6-5M.5 10.500l4-5M12.500 10.500l-4-5" fill="none" stroke="#b58a22" /></svg>
          <span className="leading-4">Mensagem</span>
        </button>
        <ul className="min-w-0 flex-1">
          <li><button type="button" className="ml-px flex h-[22px] w-full items-center gap-px bg-[#f8f8fa] pl-[4px]"><PdfIcon />Código Fonte.pdf (342 KB)</button></li>
          <li><button type="button" className="ml-px flex h-5 w-full items-center gap-px bg-[#e3e3e3] pl-[4px]"><PdfIcon />APS - Trabalho 4º semestre.pdf (2 MB)</button></li>
        </ul>
      </div>
      <div className="flex pt-4 pl-[15px]">
        <svg width="22" height="20" viewBox="0 0 22 20" className="mr-[14px] shrink-0" aria-hidden="true"><path d="M11 1l10 17.500H1z" fill="#fbcf3b" stroke="#c9972a" strokeLinejoin="round" /><path d="M10 6.500h2.200l-.5 6h-1.200zM10 14h2.200v2.200H10z" fill="#2a2a2a" /></svg>
        <div className="leading-[13px]">
          <p className="font-bold">Você só deve visualizar arquivos de uma fonte confiável.</p>
          <p className="mt-[15px]">A visualização do arquivo pode não mostrar seu conteúdo inteiro. Para ver o conteúdo mais completo e atualizado, abra o arquivo.</p>
          <button type="button" className="mt-[15px] h-[21px] w-[109px] rounded-xs border border-[#707070] bg-[linear-gradient(#f4f4f4,#ececec_50%,#dcdcdc_51%,#d2d2d2)] text-[#333]">Visualizar arquivo</button>
          <div className="mt-[17px] flex items-start">
            <input id="sempre-avisar" type="checkbox" defaultChecked className="peer sr-only" />
            <label htmlFor="sempre-avisar" className="flex items-start">
              <svg width="13" height="13" viewBox="0 0 13 13" className="mr-[6px] shrink-0" aria-hidden="true"><path d="M.5.500h12v12H.5z" fill="#f4f4f4" stroke="#8e8f8f" /><path d="M2.500 2.500h8v8h-8z" fill="#dfe3ea" stroke="#c2c9d4" /><path d="M3.500 6l2 3.500L9.500 3" fill="none" stroke="#3e4f9c" strokeWidth="1.800" /></svg>
              <span>Sempre avisar antes de visualizar este tipo<br />de arquivo.</span>
            </label>
          </div>
        </div>
      </div>
      <div className={"mt-auto " + SPLITTER} />
      <div className="flex h-[35px] items-center bg-[#f2f3f5] pl-[13px]">
        <svg width="16" height="16" viewBox="0 0 16 16" aria-hidden="true"><circle cx="8" cy="8" r="7.600" fill="#3d73cf" stroke="#2b57a8" /><path d="M7 3h2.200v2H7zM6.500 6.500h2.700v5H10V13H6.300v-1.500H7V8h-.5z" fill="#fff" /></svg>
        <span className="ml-3 text-xs">Mais informaç...</span>
        <div className="mr-[3px] ml-auto flex gap-[2px]"><Person /><Person /><Person /><Person /></div>
        <Tri dir="right" color="#c6c9ce" />
        <svg width="8" height="6" viewBox="0 0 8 6" className="mr-1 ml-[5px]" aria-hidden="true"><path d="M1 5l3-3 3 3" fill="none" stroke="#222" strokeWidth="2" /></svg>
      </div>
    </section>
  );
}

const WEEKS = [
  [26, 27, 28, 29, 30, 31, 1],
  [2, 3, 4, 5, 6, 7, 8],
  [9, 10, 11, 12, 13, 14, 15],
  [16, 17, 18, 19, 20, 21, 22],
  [23, 24, 25, 26, 27, 28, 29],
  [30, 1, 2, 3, 4, 5, 6],
];

function TodoBar() {
  return (
    <aside aria-label="Barra de tarefas pendentes" className="flex w-[226px] shrink-0 flex-col pr-[4px] pb-[5px] pl-[10px]">
      <button type="button" aria-label="Minimizar barra" className="mt-[9px] ml-1 w-[7px]">
        <svg width="7" height="8" viewBox="0 0 7 8" aria-hidden="true"><path d="M1.500 1L5 4 1.500 7" fill="none" stroke="#4b4f56" strokeWidth="1.800" /></svg>
      </button>
      <div className="mr-[33px] ml-[33px] flex items-center justify-between leading-4 text-[#3b3b3b]">
        <button type="button" aria-label="Mês anterior"><Tri dir="left" color="#222" /></button>
        novembro 2014
        <button type="button" aria-label="Próximo mês"><Tri dir="right" color="#222" /></button>
      </div>
      <table className="ml-[33px] w-[140px] table-fixed border-collapse text-right text-[#333]">
        <thead>
          <tr className="h-[18px] border-b border-[#d4d7db]">
            {["D", "S", "T", "Q", "Q", "S", "S"].map((d, i) => (
              <th key={i} className="p-0 pr-1 text-right font-normal">{d}</th>
            ))}
          </tr>
        </thead>
        <tbody>
          {WEEKS.map((w, r) => (
            <tr key={r} className="h-4 leading-4">
              {w.map((d, c) => {
                const other = (r === 0 && d > 7) || (r === 5 && d < 7);
                const today = r === 4 && d === 27;
                return (
                  <td key={c} className={"p-0 pr-1 " + (other ? "text-[#a3a7ad] " : "") + (today ? "outline outline-[#c9600c] -outline-offset-1" : "")}>{d}</td>
                );
              })}
            </tr>
          ))}
        </tbody>
      </table>
      <p className="mt-[93px] text-center">Nenhum compromisso futuro.</p>
      <div className={"mt-auto " + SPLITTER} />
      <div className="mt-[3px] flex h-[99px] border-b border-[#f4f5f7]">
        <div className="flex-1">
          <div className="flex h-[22px] items-center border-b border-[#a7adb7] pl-[3px]">
            <button type="button" className="w-[178px] border-r border-[#8e949d] text-left leading-4 whitespace-nowrap">Organizar por: Sinalizador: Data...</button>
          </div>
          <input aria-label="Nova tarefa" placeholder="Digite uma nova tarefa" className="mx-[2px] mt-[2px] h-5 w-[191px] border border-[#a2a8b2] bg-white pl-[5px] outline-none placeholder:text-[#777]" />
          <p className="mt-[7px] text-center leading-[13px]">Não há itens neste modo de<br />exibição.</p>
        </div>
        <div className="flex w-[17px] flex-col justify-between border-y border-l border-[#c3c8d0] bg-[#dde0e8]">
          <FlatScroll dir="up" color="#82908f" />
          <FlatScroll dir="down" color="#82908f" />
        </div>
      </div>
    </aside>
  );
}

function StatusBar() {
  return (
    <footer className="flex h-[22px] shrink-0 items-center border-t border-[#8d9299] bg-linear-to-b from-[#e6e8eb] to-[#bfc3c9] text-[11px] text-[#33373d]">
      <span className="w-[67px] border-r border-[#8d9299] pl-2 leading-[18px]">Itens: 285</span>
      <span className="ml-auto">Esta pasta está atualizada.</span>
      <svg width="14" height="14" viewBox="0 0 14 14" className="mr-1 ml-4" aria-hidden="true"><rect width="14" height="14" rx="2" fill="#f39422" /><path d="M3 3l8 8M11 3l-8 8M7 2v3M7 9v3M2 7h3M9 7h3" stroke="#fff" strokeWidth="1.500" /></svg>
      <span className="w-[187px] border-r border-[#a5aab1] leading-[18px] whitespace-nowrap">Conectado ao Microsoft Exchange</span>
      <button type="button" aria-label="Modo normal" className="ml-[5px] flex h-[18px] w-[18px] items-center justify-center rounded-xs border border-[#c29a3f] bg-[#fcd96b]">
        <svg width="11" height="9" viewBox="0 0 11 9" aria-hidden="true"><path d="M.5.500h10v8H.5z" fill="#eef3fb" stroke="#4b4b4b" /><path d="M2.500.5v8M8.500.5v8" stroke="#4b4b4b" /></svg>
      </button>
      <button type="button" aria-label="Modo de leitura" className="ml-1">
        <svg width="13" height="11" viewBox="0 0 13 11" aria-hidden="true"><path d="M.5 1h5l1 1 1-1h5v8h-5l-1 1-1-1h-5z" fill="#f5f6f8" stroke="#6b7077" /><path d="M6.500 2v8M2 3.500h3M2 5.500h3M2 7.500h3M8 3.500h3M8 5.500h3M8 7.500h3" stroke="#6b7077" /></svg>
      </button>
      <span className="ml-3 w-[34px] text-[#8d9299]">100%</span>
      <button type="button" aria-label="Diminuir zoom" className="flex h-4 w-4 items-center justify-center rounded-full border border-[#aeb3ba] bg-[#e4e6e9] leading-3 text-[#a0a5ac]">−</button>
      <input type="range" aria-label="Zoom" defaultValue={50} className="h-3 w-[100px] appearance-none bg-[linear-gradient(#8d9299,#8d9299)] bg-[length:100%_1px] bg-center bg-no-repeat [&::-webkit-slider-thumb]:h-[7px] [&::-webkit-slider-thumb]:w-px [&::-webkit-slider-thumb]:appearance-none [&::-webkit-slider-thumb]:bg-[#8d9299]" />
      <button type="button" aria-label="Aumentar zoom" className="flex h-4 w-4 items-center justify-center rounded-full border border-[#aeb3ba] bg-[#e4e6e9] leading-3 text-[#a0a5ac]">+</button>
      <svg width="12" height="12" viewBox="0 0 12 12" className="mt-2 ml-2" aria-hidden="true"><path d="M9 0h2v2H9zM9 4h2v2H9zM5 4h2v2H5zM9 8h2v2H9zM5 8h2v2H5zM1 8h2v2H1z" fill="#8d9299" /></svg>
    </footer>
  );
}

function OutlookWindow() {
  return (
    <section aria-label="Outlook" className={"absolute top-[103px] right-[163px] bottom-[3px] left-[103px] flex flex-col rounded-md border border-[#10305e] bg-[#3d86e2] px-[6px] pb-[4px] text-[11px] text-[#3b3b3b] shadow-[0_0_0_1px_rgba(10,40,90,0.4),0_2px_10px_rgba(0,10,50,0.7)] ring-1 ring-[#9cc6f6] ring-inset " + SANS}>
      <header className="flex h-[51px] shrink-0 bg-[linear-gradient(rgba(110,165,235,0.15),rgba(190,215,245,0.65)_50%,rgba(230,240,251,0.96)_85%,#eef4fc)]">
        <div className="flex w-[387px] shrink-0 flex-col">
          <div className="flex h-[27px] items-center pl-[2px]">
            <svg width="16" height="16" viewBox="0 0 16 16" aria-hidden="true"><rect x=".5" y=".5" width="15" height="15" rx="1.500" fill="#fff5da" stroke="#c48a18" /><rect x="1" y="1" width="12" height="14" fill="#f3aa1c" /><ellipse cx="7" cy="8" rx="3" ry="3.700" fill="none" stroke="#fff" strokeWidth="2.200" /></svg>
            <span className="ml-1 h-3 w-px bg-[#5b7699]" />
            <svg width="17" height="15" viewBox="0 0 17 15" className="ml-[6px]" aria-hidden="true"><path d="M2.500 1.500h11v6h-11zM5.500 7.500h11v7h-11z" fill="#fff" stroke="#5d6f87" /><path d="M11 3h2v2h-2zM13 9h2v2h-2z" fill="#c33" /><path d="M0 9h4M0 11.500h4M0 14h4" stroke="#3f6fb6" /></svg>
            <svg width="15" height="13" viewBox="0 0 15 13" className="ml-2" aria-hidden="true"><path d="M2 2v4h4M2.500 5.500C6 1 12 1 12.500 5c.3 3-2 5-4 7" fill="none" stroke="#7e98b9" strokeWidth="2.200" /></svg>
            <span className="ml-2 h-3 w-px bg-[#2f5284]" />
            <svg width="7" height="6" viewBox="0 0 7 6" className="ml-1" aria-hidden="true"><path d="M0 .5h7" stroke="#111" /><path d="M0 2.500h7L3.500 6z" fill="#111" /></svg>
          </div>
          <nav aria-label="Guias" className="flex h-6 border-b border-[#c3c722]">
            <button type="button" className="w-14 rounded-t-xs border border-b-0 border-[#c9680c] bg-linear-to-b from-[#f0911b] to-[#ffb629] text-[#fff3df] [text-shadow:0_0_1px_#fff3df]">Arquivo</button>
            <button type="button" className="ml-[17px]">Página Inicial</button>
            <button type="button" className="ml-[28px]">Enviar/Receber</button>
            <button type="button" className="ml-[28px]">Pasta</button>
            <button type="button" className="ml-[28px]">Exibição</button>
          </nav>
        </div>
        <div className="flex w-[128px] shrink-0 flex-col border-x border-[#c3c722] text-center">
          <div className="flex h-[27px] items-center justify-center border-t-4 border-[#fde910] bg-linear-to-b from-[#7d9c5e] to-[#a5bd7f] font-bold whitespace-nowrap text-white">Ferramentas de Anexo</div>
          <button type="button" className="h-6 bg-linear-to-b from-[#eef2e2] to-white to-40% text-[#555]">Anexos</button>
        </div>
        <div className="flex min-w-0 flex-1 flex-col border-b border-[#c3c722]">
          <div className="flex items-start justify-between">
            <h2 className="pl-3 text-[11px] leading-[26px] whitespace-nowrap text-[#111]">Mensagens enviadas - Caixa de correio - Matheus Rodrigues Martins Pereira - TI/S...</h2>
            <div className="flex h-[18px] shrink-0 rounded-b border border-t-0 border-[#8fbdf2]">
              <button type="button" aria-label="Minimizar" className="flex w-7 items-center justify-center border-r border-[#8fbdf2]"><svg width="12" height="6" viewBox="0 0 12 6" className="mt-1" aria-hidden="true"><path d="M.5 1h11v4H.5z" fill="#fff" stroke="#3e4c5e" /></svg></button>
              <button type="button" aria-label="Maximizar" className="flex w-[27px] items-center justify-center border-r border-[#8fbdf2]"><svg width="12" height="10" viewBox="0 0 12 10" aria-hidden="true"><path d="M.5.500h11v9H.5z" fill="#fff" stroke="#3e4c5e" /><path d="M3.500 3.500h5v3h-5z" fill="#5c97e0" stroke="#3e4c5e" /></svg></button>
              <button type="button" aria-label="Fechar" className="flex w-[46px] items-center justify-center"><svg width="12" height="11" viewBox="0 0 13 11" aria-hidden="true"><path d="M2 1l9 9M11 1l-9 9" stroke="#3e4c5e" strokeWidth="4" /><path d="M2.500 1.500l8 8M10.500 1.500l-8 8" stroke="#fff" strokeWidth="2.200" /></svg></button>
            </div>
          </div>
          <div className="mt-1 mr-1 flex items-center justify-end gap-[9px]">
            <button type="button" aria-label="Minimizar faixa"><svg width="9" height="7" viewBox="0 0 9 7" aria-hidden="true"><path d="M1 6l3.500-4L8 6" fill="none" stroke="#3d4a5c" strokeWidth="3" /><path d="M1.500 5.500l3-3 3 3" fill="none" stroke="#fff" /></svg></button>
            <button type="button" aria-label="Ajuda" className="h-4 w-4 rounded-full border border-[#335f9f] bg-[#5e93dc] text-xs leading-[14px] font-bold text-white">?</button>
          </div>
        </div>
      </header>
      <Ribbon />
      <div className="flex min-h-0 flex-1 border-t-2 border-[#b9bd70] bg-linear-to-b from-[#e9ecf0] to-[#d9dce1]">
        <Navigation />
        <div className="ml-[9px] flex min-w-0 flex-1 py-[7px] pb-[5px]">
          <MailList />
          <ReadingPane />
        </div>
        <TodoBar />
      </div>
      <StatusBar />
    </section>
  );
}

/* -------------------------------------------------------------- desktop */

function DesktopIcon({ label, shortcut = true, children }: { label: string; shortcut?: boolean; children: React.ReactNode }) {
  return (
    <li className="h-[85px]">
      <a href={"#" + label.split(" ")[0]} className="flex flex-col items-center pt-2 text-center text-[11px] leading-[15px] text-white [text-shadow:1px_1px_2px_#000]">
        <span className="relative mb-[3px] flex h-8 w-8 items-center justify-center">
          {children}
          {shortcut && <ShortcutBadge />}
        </span>
        <span className="w-24 px-px">{label}</span>
      </a>
    </li>
  );
}

function Wallpaper() {
  return (
    <svg className="absolute inset-0 h-full w-full" viewBox="0 0 1366 768" preserveAspectRatio="none" aria-hidden="true">
      <defs>
        <linearGradient id="sky" x1="0" y1="0" x2="1" y2="1">
          <stop offset="0" stopColor="#0560dd" /><stop offset=".5" stopColor="#0668e2" /><stop offset=".8" stopColor="#0676ea" /><stop offset="1" stopColor="#0560d8" />
        </linearGradient>
        <radialGradient id="glow"><stop offset="0" stopColor="#2c9bf8" stopOpacity=".6" /><stop offset="1" stopColor="#2c9bf8" stopOpacity="0" /></radialGradient>
        <filter id="soft"><feGaussianBlur stdDeviation="7" /></filter>
        <filter id="fine"><feGaussianBlur stdDeviation="1.500" /></filter>
      </defs>
      <path d="M0 0h1366v768H0z" fill="url(#sky)" />
      <ellipse cx="700" cy="40" rx="420" ry="120" fill="url(#glow)" opacity=".4" />
      <ellipse cx="1150" cy="640" rx="280" ry="150" fill="url(#glow)" opacity=".7" />
      <path d="M1190 640C1260 590 1310 550 1366 495v30C1310 570 1260 605 1190 650z" fill="#5cb0ff" opacity=".45" filter="url(#soft)" />
      <path d="M1190 628C1260 590 1310 550 1366 500" fill="none" stroke="#84c8ff" strokeWidth="3" opacity=".5" filter="url(#fine)" />
      <path d="M1190 690C1250 665 1310 645 1366 632" fill="none" stroke="#54a8fb" strokeWidth="3" opacity=".7" filter="url(#fine)" />
      <path d="M1190 320C1250 300 1310 285 1366 262" fill="none" stroke="#2a90f5" strokeWidth="3" opacity=".4" filter="url(#fine)" />
      <path d="M100 60C200 40 260 15 320 0" fill="none" stroke="#2a90f5" strokeWidth="4" opacity=".4" filter="url(#fine)" />
      <path d="M560 30C600 55 640 80 680 110" fill="none" stroke="#6abcff" strokeWidth="4" opacity=".5" filter="url(#fine)" />
    </svg>
  );
}

function Taskbar() {
  const slot = "flex h-10 w-[62px] items-center justify-center";
  return (
    <footer className={"relative flex h-10 shrink-0 items-center border-t border-[#1c3a63] bg-[linear-gradient(to_right,#234d86,#3468ab_25%,#3a70b5_55%,#4a82c4_62%,#2f5c97_75%,#24476f)] text-[11px] text-white shadow-[inset_0_1px_0_#7ba6d8] " + SANS}>
      <button type="button" aria-label="Iniciar" className="flex w-[58px] justify-center pr-1">
        <svg width="38" height="38" viewBox="0 0 38 38" aria-hidden="true">
          <defs><radialGradient id="orb" cy=".85"><stop offset="0" stopColor="#5fe0ff" /><stop offset=".6" stopColor="#2876b8" /><stop offset="1" stopColor="#173b66" /></radialGradient></defs>
          <circle cx="19" cy="19" r="17.500" fill="url(#orb)" stroke="#9cc3e6" />
          <path d="M9 12c3-2 6-2 9 0l-2 7c-3-2-6-2-9 0z" fill="#e8552a" />
          <path d="M19.500 12.500c3 1.500 6 1.500 9-.5l-2 7c-3 2-6 2-9 .5z" fill="#8cc63f" />
          <path d="M6.800 20.500c3-2 6-2 9 0l-2 7c-3-2-6-2-9 0z" fill="#3fa0e8" />
          <path d="M17 21c3 1.500 6 1.500 9-.5l-2 7c-3 2-6 2-9 .5z" fill="#fbc62e" />
        </svg>
      </button>
      <button type="button" aria-label="Eclipse" className={slot}>
        <svg width="31" height="30" viewBox="0 0 31 30" aria-hidden="true"><defs><linearGradient id="ecl" x2="0" y2="1"><stop offset="0" stopColor="#8a7cc0" /><stop offset=".45" stopColor="#2c1d5c" /><stop offset="1" stopColor="#9a86cc" /></linearGradient></defs><circle cx="15.500" cy="15" r="14.700" fill="url(#ecl)" /><path d="M1 12h29M.8 15h29.500M1 18h29" stroke="#fff" strokeWidth="1.500" /></svg>
      </button>
      <button type="button" aria-label="MySQL Workbench" className={slot}>
        <svg width="31" height="30" viewBox="0 0 31 30" aria-hidden="true"><rect width="31" height="30" rx="2" fill="#1f4a6d" /><path d="M5 5c5-1 9 2 12 7 2 4 4 6 8 7l-3 2 4 5c-4-1-6-4-7-7-3-1-4-3-5-5M5 5c0 3 1 5 3 7v6l3 2c1-3 0-5 2-7" fill="none" stroke="#cfe3ef" strokeWidth="1.300" /><path d="M22 3l2 4 4 1" fill="none" stroke="#fff" strokeWidth="2.500" /></svg>
      </button>
      <button type="button" aria-label="Monitor" className={slot}>
        <svg width="30" height="30" viewBox="0 0 30 30" aria-hidden="true"><rect x="1" y="1" width="28" height="28" rx="3" fill="#1fc22a" stroke="#0c3d10" strokeWidth="2" /><path d="M3 15c6-9 18-9 24 0-6 8-18 8-24 0z" fill="#fff" stroke="#111" strokeWidth="2" /><circle cx="15" cy="14.500" r="4.500" fill="#111" /><circle cx="16" cy="13" r="1.500" fill="#fff" /></svg>
      </button>
      <button type="button" aria-label="Spotify" className={slot}><SpotifyMark size={31} /></button>
      <button type="button" aria-label="Windows Explorer" className={slot}>
        <svg width="33" height="30" viewBox="0 0 33 30" aria-hidden="true"><path d="M2 3h10l2 2h16v23H2z" fill="#f0d98a" stroke="#c4a145" /><path d="M5 1.500h7v3H5z" fill="#3cab4b" /><path d="M15 4h7v3h-7z" fill="#d83a2a" /><path d="M22 6h8v3h-8z" fill="#3f8ed8" /><path d="M2 8h29v20H2z" fill="#f7e7aa" stroke="#cdb058" /><path d="M8 29v-9c0-2 1-3 3-3h12c2 0 3 1 3 3v9h-5v-6h-8v6z" fill="#a8dcf4" stroke="#6fb1d4" /></svg>
      </button>
      <button type="button" aria-label="VLC" className={slot}><VlcMark size={29} /></button>
      <button type="button" aria-label="Chrome" className="mx-px flex h-[38px] w-[60px] items-center justify-center rounded-xs border border-[#e4eefa] bg-[linear-gradient(135deg,#dbe6f3,#9fbbe0_50%,#c2d6ee)]">
        <svg width="30" height="30" viewBox="0 0 30 30" aria-hidden="true"><circle cx="15" cy="15" r="14.500" fill="#fbd01f" /><path d="M2.400 7.700A14.500 14.500 0 0 1 27.700 8H15a7 7 0 0 0-6.600 5z" fill="#e03a2a" /><path d="M2.400 7.700L9 18.500a7 7 0 0 0 8 3.200l-3.500 7.700A14.500 14.500 0 0 1 2.400 7.700z" fill="#37a34a" /><circle cx="15" cy="15" r="6.800" fill="#fff" /><circle cx="15" cy="15" r="5.300" fill="#3a78c9" /></svg>
      </button>
      <button type="button" aria-label="Outlook" className="mx-px flex h-[38px] w-[60px] items-center justify-center rounded-xs border border-[#b3cdeb] bg-linear-to-b from-[#94b5df] to-[#6a95cf]">
        <svg width="31" height="30" viewBox="0 0 31 30" aria-hidden="true"><path d="M2 2h22v24H2z" fill="#f6b02a" stroke="#d28713" /><path d="M12 18l8-5 10 5v11H12z" fill="#fff6dd" stroke="#d9a43a" /><ellipse cx="10.500" cy="12.500" rx="5" ry="6.500" fill="none" stroke="#fff" strokeWidth="3.200" /><circle cx="24" cy="12" r="5.500" fill="#fff" stroke="#e29a20" strokeWidth="1.500" /><path d="M24 9v3.500h3" fill="none" stroke="#c77a10" /></svg>
      </button>
      <div className="ml-auto flex h-full items-center">
        <span className="mr-4">PT</span>
        <Tri dir="up" color="#f4f8fc" />
        <svg width="16" height="16" viewBox="0 0 16 16" className="ml-3" aria-hidden="true"><path d="M1.500 1v14" stroke="#fff" strokeWidth="1.500" /><path d="M3 2c3-1 4 2 8 1v7c-4 1-5-2-8-1z" fill="#fff" /><circle cx="11" cy="11" r="4.500" fill="#e0301e" /><path d="M9 9l4 4M13 9l-4 4" stroke="#fff" strokeWidth="1.500" /></svg>
        <svg width="17" height="16" viewBox="0 0 17 16" className="ml-2" aria-hidden="true"><path d="M5.500 4.500h10v7h-10zM7 14h8" fill="#234b78" stroke="#fff" strokeWidth="1.500" /><path d="M1.500 1v4h4V1M3.500 5v8H5" fill="none" stroke="#fff" strokeWidth="1.300" /></svg>
        <svg width="17" height="14" viewBox="0 0 17 14" className="ml-2" aria-hidden="true"><path d="M1 5h2l4-4v12L3 9H1z" fill="#fff" /><path d="M9.500 4.500c1 1.500 1 3.500 0 5M11.800 3c2 2.500 2 5.500 0 8M14 1.500c2.600 3.300 2.600 7.700 0 11" fill="none" stroke="#fff" strokeWidth="1.200" /></svg>
        <time className="ml-[14px] w-[66px] text-center leading-4">16:43<br />27/11/2014</time>
        <button type="button" aria-label="Mostrar área de trabalho" className="ml-2 h-full w-[14px] border border-[#7d9cc2] bg-linear-to-b from-[#6c8db5] to-[#24476f]" />
      </div>
    </footer>
  );
}

function Desktop() {
  return (
    <section className={"relative flex min-w-0 flex-col overflow-hidden " + SANS}>
      <Wallpaper />
      <div className="relative min-h-0 flex-1">
        <ul className="flex w-24 flex-col">
          <DesktopIcon label="Lixeira" shortcut={false}>
            <svg width="26" height="30" viewBox="0 0 26 30" aria-hidden="true"><path d="M1 3h24l-4.500 25c-3 2-12 2-15 0z" fill="#9fc4e8" opacity=".75" /><ellipse cx="13" cy="3.500" rx="11.800" ry="2.500" fill="#5f8fc4" stroke="#e4f0fb" /><path d="M5 20l1.500 7.500c3 1.500 10 1.500 13 0L21 20c-5-2-11 3-16 0z" fill="#eef2f5" /><path d="M3 5l4 22M23 5l-4 22" stroke="#dbeaf7" fill="none" /></svg>
          </DesktopIcon>
          <DesktopIcon label="Adobe Reader XI">
            <svg width="29" height="28" viewBox="0 0 29 28" aria-hidden="true"><path d="M0 0h29v28H0z" fill="#c20d0d" /><path d="M0 0h29v11H0z" fill="#dc2020" /><path d="M14 5c2 0 1 6-1 10-2 3-5 5-4 3 2-3 9-5 14-3 2 2-4 1-7-3-2-3-3-7-2-7z" fill="none" stroke="#fff" strokeWidth="1.500" /></svg>
          </DesktopIcon>
          <DesktopIcon label="CCleaner">
            <svg width="31" height="31" viewBox="0 0 31 31" aria-hidden="true"><path d="M30 6C22-2 6 0 4 13c-1 12 14 20 26 12l-5-6c-5 4-13 1-13-5 1-7 9-8 12-3z" fill="#d9432b" /><path d="M19 0l2 1-5 14-4 3z" fill="#2b7bd0" /><path d="M6 22l8-8 8 8-8 8z" fill="#e58a2e" /></svg>
          </DesktopIcon>
          <DesktopIcon label="Spotify"><SpotifyMark size={31} /></DesktopIcon>
          <DesktopIcon label="TI - Consulta - Atalho">
            <svg width="30" height="30" viewBox="0 0 30 30" aria-hidden="true"><path d="M6 1h18l5 5v23H6z" fill="#f5f9fd" stroke="#88a4c8" /><path d="M17 9h9M17 13h9M17 17h9M14 21h12M14 25h12" stroke="#6f9fd6" strokeWidth="2" /><path d="M0 3h16v14H0z" fill="#2f9a3f" /><path d="M4 5l8 10M12 5L4 15" stroke="#fff" strokeWidth="2.500" /></svg>
          </DesktopIcon>
          <DesktopIcon label="VLC media player"><VlcMark size={30} /></DesktopIcon>
          <DesktopIcon label="wilson" shortcut={false}>
            <svg width="23" height="28" viewBox="0 0 23 28" aria-hidden="true"><path d="M.5 2.500h17l5 5v20H.5z" fill="#fbfcfd" stroke="#b7c3d0" /><path d="M3 2.500h14" stroke="#444" strokeWidth="2" strokeDasharray="1.500 2" /><path d="M3 10h17M3 13h17M3 16h17M3 19h17M3 22h17" stroke="#c9d4e0" /></svg>
          </DesktopIcon>
        </ul>
        <OutlookWindow />
      </div>
      <Taskbar />
    </section>
  );
}

export default function App() {
  return (
    <div className="grid min-h-screen grid-cols-2">
      <Browser />
      <Desktop />
    </div>
  );
}
